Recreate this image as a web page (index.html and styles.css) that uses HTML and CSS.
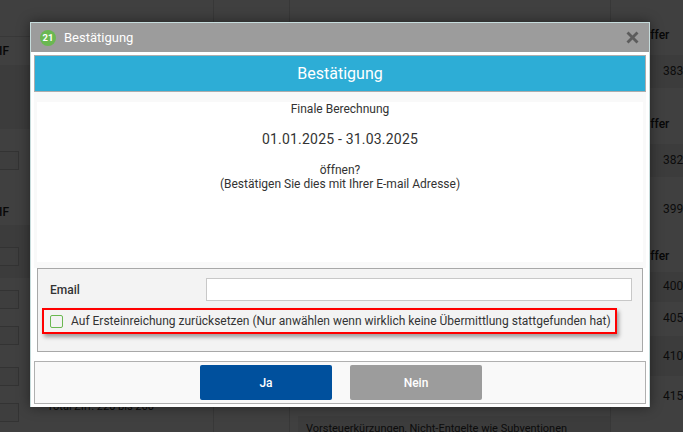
FILE: index.html
```html
<!DOCTYPE html>
<html lang="de">
<head>
<meta charset="utf-8">
<title>Bestätigung</title>
<link rel="stylesheet" href="styles.css">
</head>
<body>
<div class="page">
  <div class="col col-left">
    <div class="line-h"></div>
    <div class="lbl l1">IF</div>
    <div class="band b1"></div>
    <div class="band b2"></div>
    <div class="box bx1"></div>
    <div class="lbl l2">IF</div>
    <div class="box bx2"></div>
    <div class="box bx3"></div>
    <div class="box bx4"></div>
    <div class="box bx5"></div>
    <div class="box bx6"></div>
    <div class="total">Total Ziff. 220 bis 260</div>
  </div>
  <div class="col col-mid"></div>
  <div class="col col-main">
    <div class="band b3"></div>
    <div class="foot">Vorsteuerkürzungen, Nicht-Entgelte wie Subventionen</div>
  </div>
  <div class="col col-right">
    <div class="band r-b1"></div>
    <div class="band r-b2"></div>
    <div class="band r-b3"></div>
    <div class="band r-b4"></div>
    <div class="hd r1">Ziffer</div>
    <div class="num r2">383</div>
    <div class="hd r3">Ziffer</div>
    <div class="num r4">382</div>
    <div class="num r5">399</div>
    <div class="hd r6">Ziffer</div>
    <div class="num r7">400</div>
    <div class="num r8">405</div>
    <div class="num r9">410</div>
    <div class="num r10">415</div>
  </div>
</div>

<div class="overlay"></div>

<div class="dialog">
  <div class="titlebar">
    <span class="badge">21</span>
    <span class="title">Bestätigung</span>
    <svg class="close" width="13" height="13" viewBox="0 0 13 13"><path d="M0.5 2.5 2.5 0.5 6.5 4.5 10.5 0.5 12.5 2.5 8.5 6.5 12.5 10.5 10.5 12.5 6.5 8.5 2.5 12.5 0.5 10.5 4.5 6.5Z"/></svg>
  </div>
  <div class="body">
    <div class="banner">Bestätigung</div>
    <div class="content-wrap">
      <div class="content">
        <p class="line">Finale Berechnung</p>
        <p class="dates">01.01.2025 - 31.03.2025</p>
        <p class="line">öffnen?<br>(Bestätigen Sie dies mit Ihrer E-mail Adresse)</p>
      </div>
    </div>
    <div class="form">
      <div class="row">
        <label class="email-label" for="email">Email</label>
        <input class="email-input" id="email" type="text">
      </div>
      <div class="reset">
        <span class="check"></span>
        <span>Auf Ersteinreichung zurücksetzen (Nur anwählen wenn wirklich keine Übermittlung stattgefunden hat)</span>
      </div>
    </div>
    <div class="actions">
      <button class="btn btn-yes" type="button">Ja</button>
      <button class="btn btn-no" type="button">Nein</button>
    </div>
  </div>
</div>
</body>
</html>
```
FILE: styles.css
```css
* { box-sizing: border-box; }
html, body { margin: 0; padding: 0; }
body {
  width: 683px;
  height: 432px;
  overflow: hidden;
  font-family: Roboto, "Liberation Sans", sans-serif;
  font-size: 12px;
  color: #333;
  background: #fff;
}
.page {
  display: grid;
  grid-template-columns: 214px 76px 1fr 72px;
  width: 683px;
  height: 432px;
  background: #fff;
  overflow: hidden;
}
.col { position: relative; overflow: hidden; border-right: 1px solid #ddd; }
.col-right { border-right: 0; }
.lbl, .hd, .num, .box, .band, .total, .foot, .line-h { position: absolute; }
.line-h { top: 36px; left: 0; width: 100%; height: 1px; background: #ddd; }
.lbl { left: -1px; font-weight: 500; font-size: 12px; color: #222; white-space: nowrap; }
.l1 { top: 44px; }
.l2 { top: 205px; }
.band { left: 0; width: 100%; background: #efefef; }
.b1 { top: 65px; height: 64px; }
.b2 { top: 225px; height: 53px; }
.b3 { top: 416px; left: 8px; height: 16px; }
.box { left: -10px; width: 29px; height: 19px; border: 1px solid #ccc; background: #f7f7f7; }
.bx1 { top: 151px; }
.bx2 { top: 247px; }
.bx3 { top: 290px; }
.bx4 { top: 326px; }
.bx5 { top: 367px; }
.bx6 { top: 403px; }
.total { top: 400px; left: 47px; font-size: 11px; color: #333; white-space: nowrap; }
.foot { top: 422px; left: 16px; font-size: 11px; white-space: nowrap; color: #333; }
.hd { left: 29px; font-weight: 500; font-size: 12px; color: #222; white-space: nowrap; }
.num { left: 52px; color: #333; font-size: 12px; }
.r-b1 { top: 55px; height: 33px; }
.r-b2 { top: 144px; height: 33px; }
.r-b3 { top: 272px; height: 30px; }
.r-b4 { top: 336px; height: 40px; }
.r1 { top: 28px; }
.r2 { top: 64px; }
.r3 { top: 117px; }
.r4 { top: 153px; }
.r5 { top: 202px; }
.r6 { top: 249px; }
.r7 { top: 279px; }
.r8 { top: 311px; }
.r9 { top: 349px; }
.r10 { top: 389px; }

.overlay {
  position: absolute;
  inset: 0;
  background: rgba(0, 0, 0, .75);
}
.dialog {
  position: absolute;
  left: 30px;
  top: 22px;
  width: 620px;
  height: 385px;
  display: flex;
  flex-direction: column;
  background: #fff;
  border: 1px solid #c6dcdc;
  box-shadow: 0 0 12px rgba(0, 0, 0, .45);
}
.titlebar {
  flex: 0 0 29px;
  display: flex;
  align-items: center;
  padding: 0 10px 0 9px;
  background: #9c9c9c;
  color: #fff;
  font-size: 13px;
}
.badge {
  width: 16px;
  height: 16px;
  margin-right: 8px;
  border-radius: 50%;
  background: #6ab851;
  color: #fff;
  font-size: 9.5px;
  font-weight: 700;
  line-height: 16px;
  text-align: center;
}
.title { flex: 1; }
.close { fill: #5c5c5c; }
.body {
  flex: 1;
  display: flex;
  flex-direction: column;
  padding: 3px;
  background: #fff;
}
.banner {
  flex: 0 0 37px;
  display: flex;
  align-items: center;
  justify-content: center;
  background: #2dadd6;
  border: 1px solid #adadad;
  color: #fff;
  font-size: 16px;
}
.content-wrap {
  flex: 0 0 176px;
  padding: 10px 3px 6px;
  background: #f9f9f9;
}
.content {
  height: 100%;
  background: #fff;
  text-align: center;
}
.line { margin: 0; font-size: 12px; line-height: 14px; color: #333; }
.dates { margin: 15px 0 16px; font-size: 14px; line-height: 16px; color: #333; letter-spacing: .2px; }
.form {
  flex: 0 0 84px;
  margin: 0 3px 9px;
  padding: 9px 10px 0 4px;
  background: #f3f3f3;
  border: 1px solid #a8a8a8;
}
.row { display: flex; align-items: center; height: 23px; margin-bottom: 7px; }
.email-label { width: 164px; padding-left: 8px; font-weight: 500; font-size: 12px; color: #333; }
.email-input {
  flex: none;
  width: 426px;
  height: 23px;
  padding: 0 4px;
  background: #fff;
  border: 1px solid #c8c8c8;
}
.reset {
  display: flex;
  align-items: center;
  gap: 8px;
  width: 575px;
  height: 26px;
  padding-left: 6px;
  background: #f3f3f3;
  border: 2px solid #f00;
  box-shadow: 2px 3px 4px rgba(0, 0, 0, .35);
  color: #333;
  font-size: 12px;
  white-space: nowrap;
}
.check {
  flex: none;
  width: 13px;
  height: 13px;
  border: 1px solid #6ab851;
  border-radius: 2px;
  background: #f3f3f3;
}
.actions {
  flex: 0 0 43px;
  display: flex;
  gap: 18px;
  padding: 3px 0 0 165px;
  background: #f9f9f9;
  border: 1px solid #b0b0b0;
}
.btn {
  width: 132px;
  height: 35px;
  border: 0;
  border-radius: 2px;
  color: #fff;
  font-family: inherit;
  font-size: 12px;
  font-weight: 500;
}
.btn-yes { background: #00509d; }
.btn-no { background: #9c9c9c; }
```
